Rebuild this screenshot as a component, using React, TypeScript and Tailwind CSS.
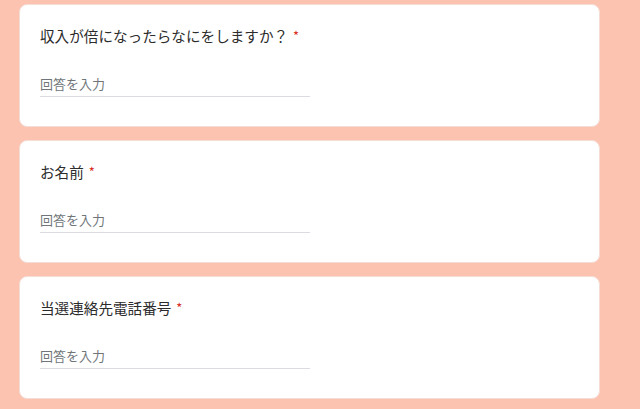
import React from "react";

const questions = [
  "収入が倍になったらなにをしますか？",
  "お名前",
  "当選連絡先電話番号",
];

export default function App() {
  return (
    <div
      className="min-h-[409px] w-[640px] bg-[#fdc3b1] pl-[19px] pt-[4px] flex flex-col gap-[13px]"
      style={{ fontFamily: '"Noto Sans CJK JP", "Noto Sans", sans-serif' }}
    >
      {questions.map((q, i) => (
        <div
          key={i}
          className="w-[581px] h-[123px] bg-white rounded-[8px] border border-[#f3ddd5] pl-[20px] pt-[22px] flex flex-col"
        >
          <div className="text-[14.6px] leading-[18px] text-[#2c2c2c] flex items-center">
            <span>{q}</span>
            <span className="text-[#d93025] ml-[5px] text-[13px]">*</span>
          </div>
          <div className="mt-[29px] w-[270px] border-b border-[#dadce0] pb-[2px] text-[13px] leading-[20px] text-[#70757a]">
            回答を入力
          </div>
        </div>
      ))}
    </div>
  );
}
